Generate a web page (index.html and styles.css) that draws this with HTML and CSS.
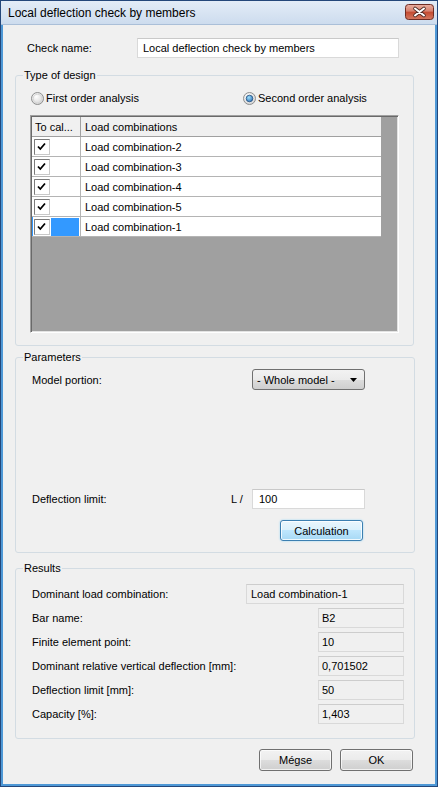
FILE: index.html
```html
<!DOCTYPE html>
<html>
<head>
<meta charset="utf-8">
<title>Local deflection check by members</title>
<link rel="stylesheet" href="styles.css">
</head>
<body>
<div class="window">
  <div class="titlebar">
    <span class="title">Local deflection check by members</span>
    <svg class="close" width="29" height="16" viewBox="0 0 29 16">
      <defs>
        <linearGradient id="closeg" x1="0" y1="0" x2="0" y2="1">
          <stop offset="0" stop-color="#eab0a3"/>
          <stop offset="0.45" stop-color="#d6806d"/>
          <stop offset="0.5" stop-color="#c44a30"/>
          <stop offset="1" stop-color="#d47a62"/>
        </linearGradient>
      </defs>
      <rect x="0.5" y="0.5" width="28" height="15" rx="3" fill="url(#closeg)" stroke="#6e2c23"/>
      <path d="M10 4.5 L19 11.5 M19 4.5 L10 11.5" stroke="#4d2a24" stroke-width="3.6" stroke-linecap="round"/>
      <path d="M10 4.5 L19 11.5 M19 4.5 L10 11.5" stroke="#ffffff" stroke-width="2" stroke-linecap="round"/>
    </svg>
  </div>

  <div class="client">
    <div class="check-row">
      <span class="check-label">Check name:</span>
      <div class="textbox name-box">Local deflection check by members</div>
    </div>

    <fieldset class="group group-design">
      <legend>Type of design</legend>
      <div class="radio-row">
        <div class="radio radio-first">
          <svg width="13" height="13" viewBox="0 0 13 13">
            <defs>
              <radialGradient id="rg1" cx="0.4" cy="0.35" r="0.75">
                <stop offset="0" stop-color="#ffffff"/>
                <stop offset="1" stop-color="#cfcfcf"/>
              </radialGradient>
            </defs>
            <circle cx="6.5" cy="6.5" r="6" fill="url(#rg1)" stroke="#8e8f8f"/>
            <circle cx="6.5" cy="6.5" r="4.3" fill="none" stroke="#d6d6d6"/>
          </svg>
          <span>First order analysis</span>
        </div>
        <div class="radio">
          <svg width="13" height="13" viewBox="0 0 13 13">
            <defs>
              <radialGradient id="rg2" cx="0.4" cy="0.35" r="0.75">
                <stop offset="0" stop-color="#ffffff"/>
                <stop offset="1" stop-color="#cfcfcf"/>
              </radialGradient>
              <radialGradient id="rb2" cx="0.4" cy="0.35" r="0.8">
                <stop offset="0" stop-color="#9fe0fb"/>
                <stop offset="1" stop-color="#1a5fae"/>
              </radialGradient>
            </defs>
            <circle cx="6.5" cy="6.5" r="6" fill="url(#rg2)" stroke="#8e8f8f"/>
            <circle cx="6.5" cy="6.5" r="3.3" fill="url(#rb2)" stroke="#24517f" stroke-width="0.8"/>
          </svg>
          <span>Second order analysis</span>
        </div>
      </div>

      <div class="grid">
        <div class="grid-row grid-head">
          <div class="cell c1">To cal...</div>
          <div class="cell c2">Load combinations</div>
        </div>
        <div class="grid-row">
          <div class="cell c1"><svg class="cb" width="16" height="16" viewBox="0 0 16 16"><rect x="0.5" y="0.5" width="15" height="15" fill="#fff" stroke="#c8c8c8"/><path d="M0.5 15.5 V0.5 H15.5" fill="none" stroke="#7a7a7a"/><path d="M4 7.5 L6.3 10 L11 4.5" fill="none" stroke="#000" stroke-width="1.8"/></svg></div>
          <div class="cell c2">Load combination-2</div>
        </div>
        <div class="grid-row">
          <div class="cell c1"><svg class="cb" width="16" height="16" viewBox="0 0 16 16"><rect x="0.5" y="0.5" width="15" height="15" fill="#fff" stroke="#c8c8c8"/><path d="M0.5 15.5 V0.5 H15.5" fill="none" stroke="#7a7a7a"/><path d="M4 7.5 L6.3 10 L11 4.5" fill="none" stroke="#000" stroke-width="1.8"/></svg></div>
          <div class="cell c2">Load combination-3</div>
        </div>
        <div class="grid-row">
          <div class="cell c1"><svg class="cb" width="16" height="16" viewBox="0 0 16 16"><rect x="0.5" y="0.5" width="15" height="15" fill="#fff" stroke="#c8c8c8"/><path d="M0.5 15.5 V0.5 H15.5" fill="none" stroke="#7a7a7a"/><path d="M4 7.5 L6.3 10 L11 4.5" fill="none" stroke="#000" stroke-width="1.8"/></svg></div>
          <div class="cell c2">Load combination-4</div>
        </div>
        <div class="grid-row">
          <div class="cell c1"><svg class="cb" width="16" height="16" viewBox="0 0 16 16"><rect x="0.5" y="0.5" width="15" height="15" fill="#fff" stroke="#c8c8c8"/><path d="M0.5 15.5 V0.5 H15.5" fill="none" stroke="#7a7a7a"/><path d="M4 7.5 L6.3 10 L11 4.5" fill="none" stroke="#000" stroke-width="1.8"/></svg></div>
          <div class="cell c2">Load combination-5</div>
        </div>
        <div class="grid-row selected">
          <div class="cell c1"><svg class="cb" width="16" height="16" viewBox="0 0 16 16"><rect x="0.5" y="0.5" width="15" height="15" fill="#fff" stroke="#c8c8c8"/><path d="M0.5 15.5 V0.5 H15.5" fill="none" stroke="#7a7a7a"/><path d="M4 7.5 L6.3 10 L11 4.5" fill="none" stroke="#000" stroke-width="1.8"/></svg><span class="sel-fill"></span></div>
          <div class="cell c2">Load combination-1</div>
        </div>
      </div>
    </fieldset>

    <fieldset class="group group-params">
      <legend>Parameters</legend>
      <div class="param-row">
        <span class="param-label">Model portion:</span>
        <div class="dropdown">
          <span>- Whole model -</span>
          <svg width="7" height="4" viewBox="0 0 7 4"><path d="M0 0 H7 L3.5 4 Z" fill="#000"/></svg>
        </div>
      </div>
      <div class="param-row defl-row">
        <span class="defl-label">Deflection limit:</span>
        <span class="l-label">L /</span>
        <div class="textbox defl-box">100</div>
      </div>
      <div class="calc-row">
        <div class="btn btn-focus">Calculation</div>
      </div>
    </fieldset>

    <fieldset class="group group-results">
      <legend>Results</legend>
      <div class="res-row">
        <span>Dominant load combination:</span>
        <div class="resbox wide">Load combination-1</div>
      </div>
      <div class="res-row">
        <span>Bar name:</span>
        <div class="resbox">B2</div>
      </div>
      <div class="res-row">
        <span>Finite element point:</span>
        <div class="resbox">10</div>
      </div>
      <div class="res-row">
        <span>Dominant relative vertical deflection [mm]:</span>
        <div class="resbox">0,701502</div>
      </div>
      <div class="res-row">
        <span>Deflection limit [mm]:</span>
        <div class="resbox">50</div>
      </div>
      <div class="res-row">
        <span>Capacity [%]:</span>
        <div class="resbox">1,403</div>
      </div>
    </fieldset>

    <div class="button-row">
      <div class="btn">Mégse</div>
      <div class="btn">OK</div>
    </div>
  </div>
</div>
</body>
</html>
```

FILE: styles.css
```css
* {
  box-sizing: border-box;
}

html, body {
  margin: 0;
  padding: 0;
}

body {
  width: 438px;
  height: 787px;
  overflow: hidden;
  font-family: "Liberation Sans", Arial, sans-serif;
  font-size: 11px;
  color: #000;
  background: #ffffff;
}

.window {
  width: 438px;
  height: 787px;
  display: flex;
  flex-direction: column;
  border: 1px solid #24477a;
  background: #4e98d6;
  padding: 0 2px 2px 2px;
}

.titlebar {
  height: 24px;
  margin: 0 -2px;
  padding: 0 3px 0 7px;
  display: flex;
  align-items: flex-start;
  justify-content: space-between;
  background: linear-gradient(#e3ecf7, #cddcee);
  border-bottom: 1px solid #aabfd8;
}

.title {
  font-size: 12px;
  line-height: 24px;
  color: #000;
}

.close {
  margin-top: 3px;
  display: block;
}

.client {
  flex: 1;
  background: #f0f0f0;
  padding-top: 13px;
  display: flex;
  flex-direction: column;
}

.check-row {
  display: flex;
  align-items: center;
  height: 20px;
  padding-left: 24px;
}

.check-label {
  width: 110px;
}

.textbox {
  height: 20px;
  background: #fff;
  border: 1px solid #d9d9d9;
  border-top-color: #c9c9c9;
  display: flex;
  align-items: center;
}

.name-box {
  width: 262px;
  padding-left: 5px;
}

.group {
  margin: 0 0 0 12px;
  padding: 0;
  border: 1px solid #d3dce3;
  border-radius: 3px;
  min-inline-size: 0;
  width: 400px;
}

.group legend {
  margin-left: 7px;
  padding: 0 1px;
  line-height: 14px;
}

.group-design {
  width: 399px;
  margin-top: 10px;
  padding: 8px 0 12px 0;
}

.radio-row {
  display: flex;
  align-items: center;
  height: 16px;
  padding-left: 15px;
}

.radio {
  display: flex;
  align-items: center;
  gap: 2px;
}

.radio svg {
  display: block;
}

.radio-first {
  width: 212px;
}

.grid {
  margin: 9px 0 0 14px;
  width: 369px;
  height: 218px;
  background: #a0a0a0;
  border: 1px solid;
  border-color: #a0a0a0 #ffffff #ffffff #a0a0a0;
  box-shadow: inset 1px 1px 0 #696969, inset -1px -1px 0 #e3e3e3;
  padding: 1px 0 0 1px;
}

.grid-row {
  display: flex;
  width: 349px;
  height: 20px;
  background: #fff;
  border-bottom: 1px solid #b4b4b4;
}

.grid-head {
  background: #f0f0f0;
  border-bottom-color: #a0a0a0;
}

.cell {
  height: 19px;
  white-space: nowrap;
}

.c1 {
  width: 49px;
  padding-left: 2px;
  border-right: 1px solid #b4b4b4;
  display: flex;
  align-items: flex-start;
}

.grid-head .c1 {
  display: block;
  padding-left: 3px;
  line-height: 21px;
  border-right-color: #a0a0a0;
}

.c2 {
  width: 300px;
  padding-left: 4px;
  line-height: 21px;
}

.cb {
  display: block;
  margin-top: 2px;
}

.selected .c1 {
  box-shadow: inset 1px 0 0 #3399ff;
}

.sel-fill {
  display: block;
  width: 28px;
  height: 18px;
  margin: 1px 0 0 1px;
  background: #3399ff;
}

.group-params {
  margin-top: 4px;
  padding: 5px 0 11px 0;
}

.param-row {
  display: flex;
  align-items: center;
  height: 21px;
  padding-left: 16px;
}

.param-label {
  width: 220px;
}

.dropdown {
  width: 113px;
  height: 21px;
  border: 1px solid #707070;
  border-radius: 3px;
  background: linear-gradient(#f2f2f2 0%, #ebebeb 50%, #dddddd 50%, #cfcfcf 100%);
  display: flex;
  align-items: center;
  justify-content: space-between;
  padding: 0 7px 0 4px;
}

.dropdown svg {
  display: block;
}

.defl-row {
  margin-top: 99px;
  height: 20px;
}

.defl-label {
  width: 199px;
}

.l-label {
  width: 21px;
}

.defl-box {
  width: 113px;
  padding-left: 6px;
}

.calc-row {
  display: flex;
  margin-top: 11px;
  padding-left: 264px;
}

.btn {
  display: flex;
  align-items: center;
  justify-content: center;
  border: 1px solid #707070;
  border-radius: 3px;
  background: linear-gradient(#f2f2f2 0%, #ebebeb 50%, #dddddd 50%, #cfcfcf 100%);
  box-shadow: inset 0 0 0 1px rgba(255, 255, 255, 0.7);
}

.btn-focus {
  width: 83px;
  height: 21px;
  border-color: #3c7fb1;
  background: linear-gradient(#eaf6fd 0%, #d9f0fc 50%, #bee6fd 50%, #a7d9f5 100%);
  box-shadow: inset 0 0 0 1px rgba(255, 255, 255, 0.8), 0 0 2px #8fd4f8;
}

.group-results {
  margin-top: 8px;
  padding: 9px 0 14px 0;
  display: flex;
  flex-direction: column;
  gap: 4px;
}

.res-row {
  display: flex;
  align-items: center;
  justify-content: space-between;
  height: 20px;
  padding: 0 10px 0 16px;
}

.resbox {
  width: 86px;
  height: 20px;
  border: 1px solid #d9d9d9;
  border-top-color: #cdcdcd;
  background: #f0f0f0;
  display: flex;
  align-items: center;
  padding-left: 3px;
}

.resbox.wide {
  width: 158px;
  padding-left: 4px;
}

.button-row {
  display: flex;
  justify-content: flex-end;
  gap: 8px;
  margin-top: 10px;
  padding-right: 22px;
}

.button-row .btn {
  width: 73px;
  height: 22px;
}
```
